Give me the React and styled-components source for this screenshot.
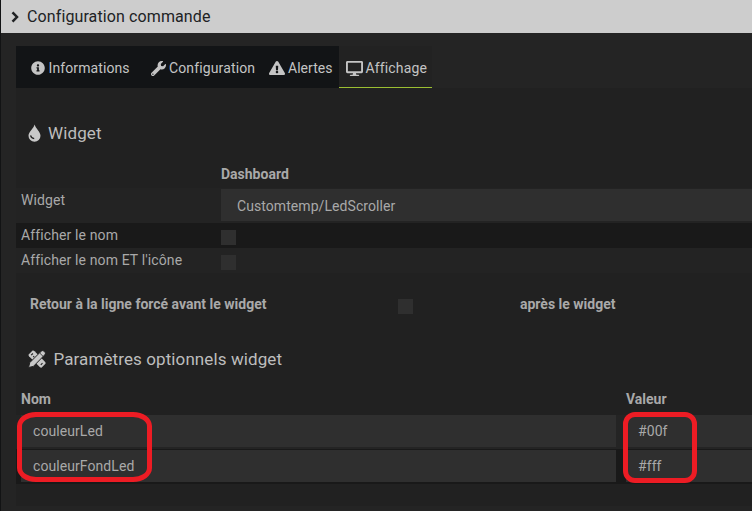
import React from "react";
import styled, { createGlobalStyle } from "styled-components";
import { FaInfoCircle, FaWrench, FaExclamationTriangle, FaDesktop } from "react-icons/fa";

const GlobalStyle = createGlobalStyle`
  * { box-sizing: border-box; }
  body { margin: 0; background: #141416; overflow: hidden; }
`;
const Dialog = styled.main`
  position: relative;
  width: 752px;
  height: 511px;
  overflow: hidden;
  border-left: 1px solid #121314;
  background: #242424;
  color: #a9a9a9;
  font: 14px/20px Roboto, sans-serif;
  white-space: nowrap;
`;
const TitleBar = styled.header`
  display: flex;
  align-items: center;
  height: 33px;
  padding: 1px 0 0 10px;
  gap: 8px;
  background: #cdcdcd;
  color: #202224;
  font-size: 16px;
`;
const Fit = styled.span`
  letter-spacing: ${(p) => p.$track || 0}px;
`;
const Tabs = styled.nav`
  display: flex;
  margin: 13px 0 0 15px;
  height: 42px;
`;
const Tab = styled.div`
  display: flex;
  align-items: center;
  width: ${(p) => p.$width}px;
  padding: ${(p) => (p.$active ? "3px 0 0" : "2px 0 0")} ${(p) => p.$pad}px;
  gap: ${(p) => p.$gap || 3}px;
  color: #c4c4c4;
  background: ${(p) => (p.$active ? "#222222" : "#121416")};
  border-bottom: ${(p) => (p.$active ? "1px solid #9bbf32" : "0")};
  svg { flex: none; }
`;
const Panel = styled.section`
  margin-left: 15px;
  height: 418px;
  background: #212121;
`;
const Heading = styled.h2`
  display: flex;
  align-items: center;
  height: 24px;
  margin: 0;
  padding: ${(p) => p.$top}px 0 0 12px;
  gap: ${(p) => p.$gap}px;
  box-sizing: content-box;
  font-size: 17px;
  font-weight: 400;
  color: #bdbdbd;
  svg { flex: none; color: #c8c8c8; }
`;
const HeadRow = styled.div`
  display: grid;
  grid-template-columns: ${(p) => p.$columns};
  align-items: center;
  height: ${(p) => p.$height}px;
  padding: ${(p) => p.$top}px 0 0 5px;
  font-weight: 700;
`;
const OptionRow = styled.div`
  display: grid;
  grid-template-columns: 200px 1fr;
  height: ${(p) => p.$height || 25}px;
  padding-left: 5px;
  background: ${(p) => (p.$dark ? "#191919" : "#232323")};
`;
const Label = styled.label`
  padding-top: 2px;
  letter-spacing: 0.12px;
`;
const Field = styled.div`
  height: 32px;
  margin-top: ${(p) => p.$top || 0}px;
  padding: ${(p) => (p.$select ? "7px 16px" : "6px 12px")};
  background: #2f2f2f;
  letter-spacing: 0.07px;
`;
const Check = styled.span`
  display: block;
  width: 15px;
  height: 15px;
  margin-top: 7px;
  background: #2f2f2f;
`;
const BreakRow = styled.div`
  display: grid;
  grid-template-columns: 368px 122px 1fr;
  height: 62px;
  padding: 21px 0 0 14px;
  font-weight: 700;
  ${Check} { margin-top: 5px; }
`;
const ParamRow = styled.div`
  display: grid;
  grid-template-columns: 595px 1fr;
  column-gap: 10px;
  height: ${(p) => (p.$dark ? 35 : 34)}px;
  padding: ${(p) => (p.$dark ? 1 : 0)}px 0 0 5px;
  background: ${(p) => (p.$dark ? "#191919" : "#242424")};
`;
const Highlight = styled.div`
  position: absolute;
  left: ${(p) => p.$left}px;
  top: 412px;
  width: ${(p) => p.$width}px;
  height: ${(p) => p.$height}px;
  border: 5px solid #ed1c24;
  border-radius: ${(p) => p.$radius};
`;

function Chevron() {
  return (
    <svg width="8" height="12" viewBox="0 0 8 12" fill="none" stroke="currentColor" strokeWidth="2.5">
      <path d="M1.5 1.3 6 6 1.5 10.7" />
    </svg>
  );
}

function Drop() {
  return (
    <svg width="13" height="18" viewBox="0 0 13 18">
      <path d="M6.6.4C7.7 4.6 12.5 7.6 12.5 11.7A6 6 0 0 1 .5 11.7C.5 7.6 5.6 4.6 6.6.4Z" fill="currentColor" />
      <path d="M2.6 11.4Q3 14.2 6.2 14.6" fill="none" stroke="#212121" strokeWidth="1.2" />
    </svg>
  );
}

function DesignTools() {
  return (
    <svg width="18" height="18" viewBox="0 0 18 18" fill="currentColor">
      <path d="M.6 4.4 4.6.6Q5.6.3 6.6 1.3L17.2 12Q18 13 17.4 13.8L13.7 17.4Q12.9 18 12 17.2L1 6.2Q.2 5.2.6 4.4Z" />
      <path d="M12.3 2.1 13.7.9Q14.8 0 15.9 1.1L16.9 2.1Q18 3.2 17.1 4.3L15.9 5.7 5.4 16.4.5 17.5 1.8 12.6Z" stroke="#212121" strokeWidth="1" />
      <path d="m3.2 5.2 1.7-1.7M5.2 7.2 6.2 6.2M12.8 14.8l1.7-1.7" fill="none" stroke="#212121" strokeWidth="1.1" />
      <path d="m11.7 3 3.3 3.3" stroke="#212121" strokeWidth=".8" />
    </svg>
  );
}

export default function App() {
  return (
    <>
      <GlobalStyle />
      <Dialog>
        <TitleBar><Chevron /><Fit $track={0.11}>Configuration commande</Fit></TitleBar>
        <Tabs>
          <Tab $width={135} $pad={15} $gap={3.5}><FaInfoCircle size={14} /><Fit $track={0.1}>Informations</Fit></Tab>
          <Tab $width={118} $pad={0}><FaWrench size={15} /><Fit $track={0.13}>Configuration</Fit></Tab>
          <Tab $width={70} $pad={0}><FaExclamationTriangle size={16} /><Fit $track={0.04}>Alertes</Fit></Tab>
          <Tab $width={93} $pad={7} $active $gap={2.5}><FaDesktop size={17} /><Fit $track={0.15}>Affichage</Fit></Tab>
        </Tabs>
        <Panel>
          <Heading $top={33} $gap={7}><Drop /><Fit $track={0.12}>Widget</Fit></Heading>
          <HeadRow $height={43} $top={15} $columns="200px 1fr"><span /><Fit>Dashboard</Fit></HeadRow>
          <OptionRow $height={35}>
            <Label>Widget</Label>
            <Field $top={1} $select>Customtemp/LedScroller</Field>
          </OptionRow>
          <OptionRow $dark><Label>Afficher le nom</Label><Check /></OptionRow>
          <OptionRow><Label>Afficher le nom ET l'icône</Label><Check /></OptionRow>
          <BreakRow><Fit>Retour à la ligne forcé avant le widget</Fit><Check /><Fit>après le widget</Fit></BreakRow>
          <Heading $top={12} $gap={7.5}><DesignTools /><Fit $track={0.1}>Paramètres optionnels widget</Fit></Heading>
          <HeadRow $height={44} $top={12} $columns="605px 1fr"><Fit>Nom</Fit><Fit>Valeur</Fit></HeadRow>
          <ParamRow><Field>couleurLed</Field><Field>#00f</Field></ParamRow>
          <ParamRow $dark><Field>couleurFondLed</Field><Field>#fff</Field></ParamRow>
        </Panel>
        <Highlight $left={16} $width={135} $height={70} $radius="19px / 14px" />
        <Highlight $left={622} $width={74} $height={71} $radius="12px" />
      </Dialog>
    </>
  );
}
